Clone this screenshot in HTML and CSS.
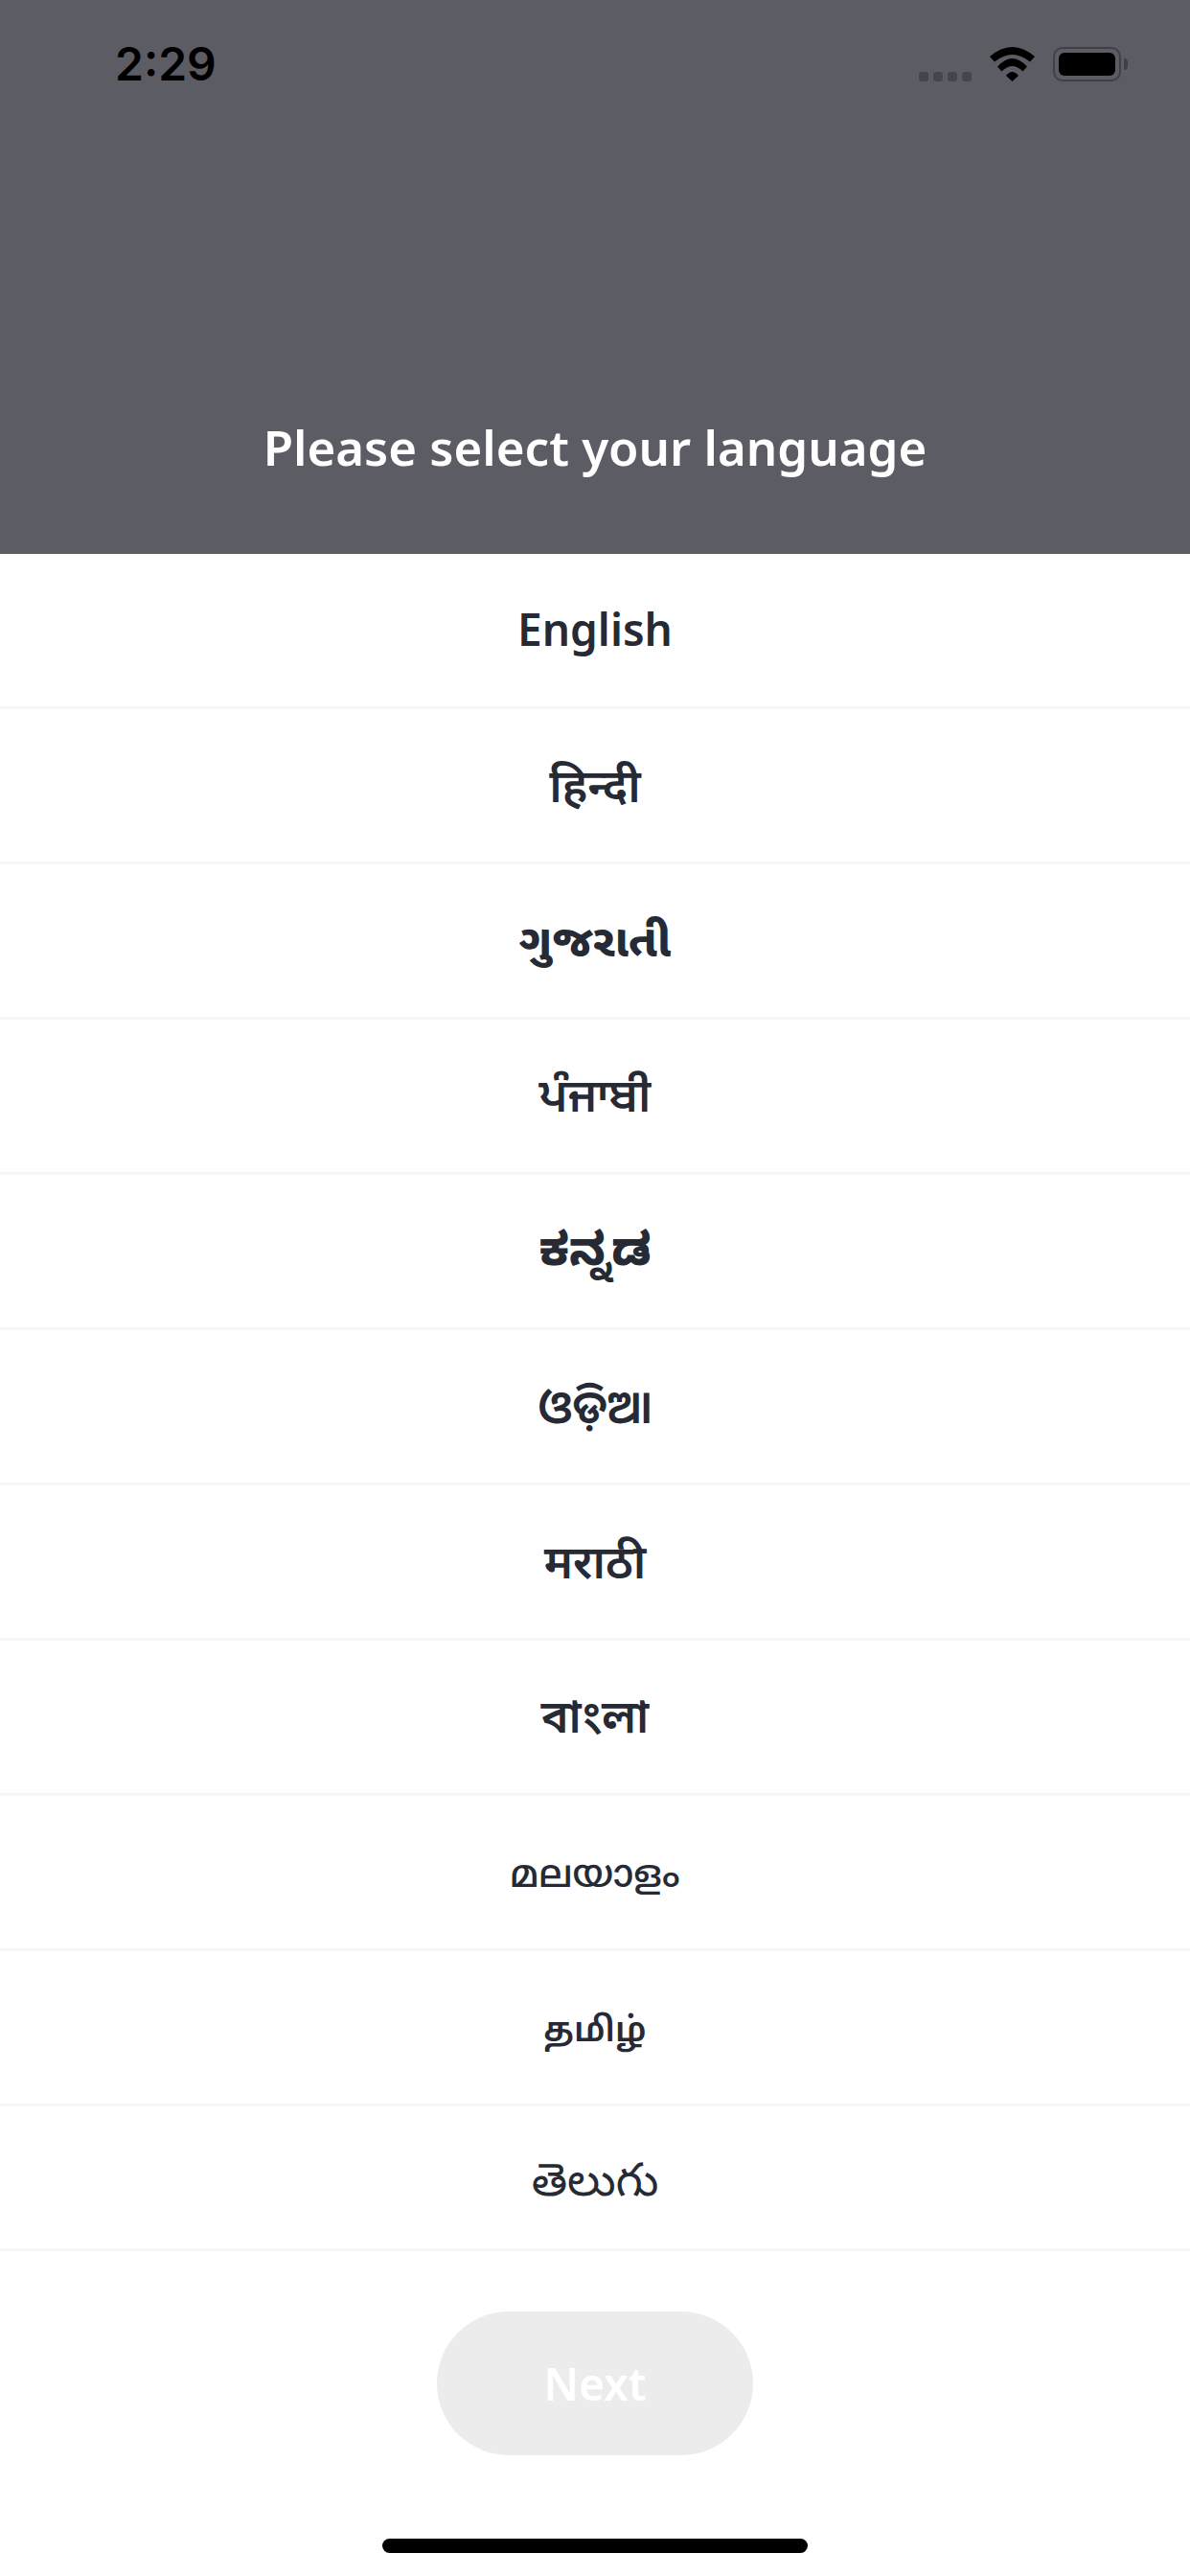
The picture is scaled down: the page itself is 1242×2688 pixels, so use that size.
FILE: index.html
```html
<!DOCTYPE html>
<html lang="en">
<head>
<meta charset="utf-8">
<title>Select language</title>
<link rel="stylesheet" href="styles.css">
</head>
<body>
<main class="screen">
  <header class="top">
    <div class="status">
      <span class="time">2:29</span>
      <div class="status-icons">
        <div class="signal"><i></i><i></i><i></i><i></i></div>
        <svg class="wifi" viewBox="0 0 47 36" width="47" height="36">
          <path d="M0 10Q23.5-10 47 10L42 15.5Q23.500 .5 5 15.500Z"/>
          <path d="M8 20.500Q23.500 3.500 39 20.500L34.500 25.500Q23.500 14.500 12.500 25.500Z"/>
          <path d="M17 30Q23.500 22 30 30L23.500 36Z"/>
        </svg>
        <div class="battery"><div class="battery-fill"></div></div>
        <div class="battery-tip"></div>
      </div>
    </div>
    <h1 class="title">Please select your language</h1>
  </header>
  <ul class="languages">
    <li class="language latin">English</li>
    <li class="language" lang="hi">हिन्दी</li>
    <li class="language strong gu" lang="gu">ગુજરાતી</li>
    <li class="language pa" lang="pa">ਪੰਜਾਬੀ</li>
    <li class="language strong kn" lang="kn">ಕನ್ನಡ</li>
    <li class="language" lang="or">ଓଡ଼ିଆ</li>
    <li class="language" lang="mr">मराठी</li>
    <li class="language bn" lang="bn">বাংলা</li>
    <li class="language ml" lang="ml">മലയാളം</li>
    <li class="language ta" lang="ta">தமிழ்</li>
    <li class="language te last" lang="te">తెలుగు</li>
  </ul>
  <footer class="bottom">
    <div class="next">Next</div>
    <div class="home-bar"></div>
  </footer>
</main>
</body>
</html>
```

FILE: styles.css
```css
* { box-sizing: border-box; }

html, body {
  margin: 0;
  padding: 0;
  background: #fff;
}

.screen {
  width: 1242px;
  height: 2688px;
  overflow: hidden;
  display: flex;
  flex-direction: column;
  font-family: "Noto Sans", "Noto Sans Devanagari", "Noto Sans Gujarati", "Noto Sans Gurmukhi", "Noto Sans Kannada", "Noto Sans Oriya", "Noto Sans Bengali", "Noto Sans Malayalam", "Noto Sans Tamil", "Noto Sans Telugu", sans-serif;
}

/* Dimmed header */
.top {
  height: 578px;
  background: #5c5c64;
  display: flex;
  flex-direction: column;
  align-items: center;
}

.status {
  width: 100%;
  height: 136px;
  padding: 40px 65px 0 120px;
  display: flex;
  justify-content: space-between;
  align-items: flex-start;
}

.time {
  font-family: Inter, sans-serif;
  font-weight: 600;
  font-size: 48px;
  line-height: 54px;
  color: #000;
}

.status-icons {
  display: flex;
  align-items: flex-end;
  margin-top: 9px;
}

.signal {
  display: flex;
  gap: 5px;
  margin-right: 19px;
}

.signal i {
  width: 10px;
  height: 10px;
  border-radius: 3px;
  background: #45454b;
}

.wifi {
  display: block;
  margin-right: 19px;
}

.wifi path { fill: #000; }

.battery {
  width: 71px;
  height: 36px;
  padding: 4px;
  border: 2px solid #404046;
  border-radius: 10px;
}

.battery-fill {
  width: 100%;
  height: 100%;
  background: #000;
  border-radius: 6px;
}

.battery-tip {
  width: 4px;
  height: 12px;
  margin: 0 0 12px 3px;
  background: #404046;
  border-radius: 0 6px 6px 0;
}

.title {
  margin: 298px 0 0;
  color: #fff;
  font-size: 51px;
  line-height: 64px;
  font-weight: 600;
}

/* Language rows */
.languages {
  list-style: none;
  margin: 0;
  padding: 0;
}

.language {
  height: 162px;
  padding-bottom: 3px;
  display: flex;
  align-items: center;
  justify-content: center;
  border-bottom: 3px solid #f6f6f6;
  color: #252a35;
  font-size: 48px;
  font-weight: 600;
}

.language.strong { font-weight: 800; }

/* Script-specific optical sizes and baselines */
.language.latin { font-size: 46px; }
.language.gu { font-size: 47px; padding-top: 4px; }
.language.pa { padding-top: 4px; }
.language.kn { padding-top: 6px; }
.language.bn { padding-top: 4px; }
.language.ml { font-size: 40px; padding-top: 6px; font-weight: 500; }
.language.ta { font-size: 36px; padding-top: 6px; }
.language.te { padding-top: 12px; font-weight: 400; }

.language.last { height: 151px; }

/* Footer action */
.bottom {
  display: flex;
  flex-direction: column;
  align-items: center;
  padding-top: 63px;
}

.next {
  width: 330px;
  height: 150px;
  border-radius: 75px;
  background: #ececec;
  color: #fff;
  font-size: 46px;
  font-weight: 600;
  display: flex;
  align-items: center;
  justify-content: center;
}

.home-bar {
  width: 444px;
  height: 15px;
  margin-top: 87px;
  border-radius: 8px;
  background: #000;
}
```
